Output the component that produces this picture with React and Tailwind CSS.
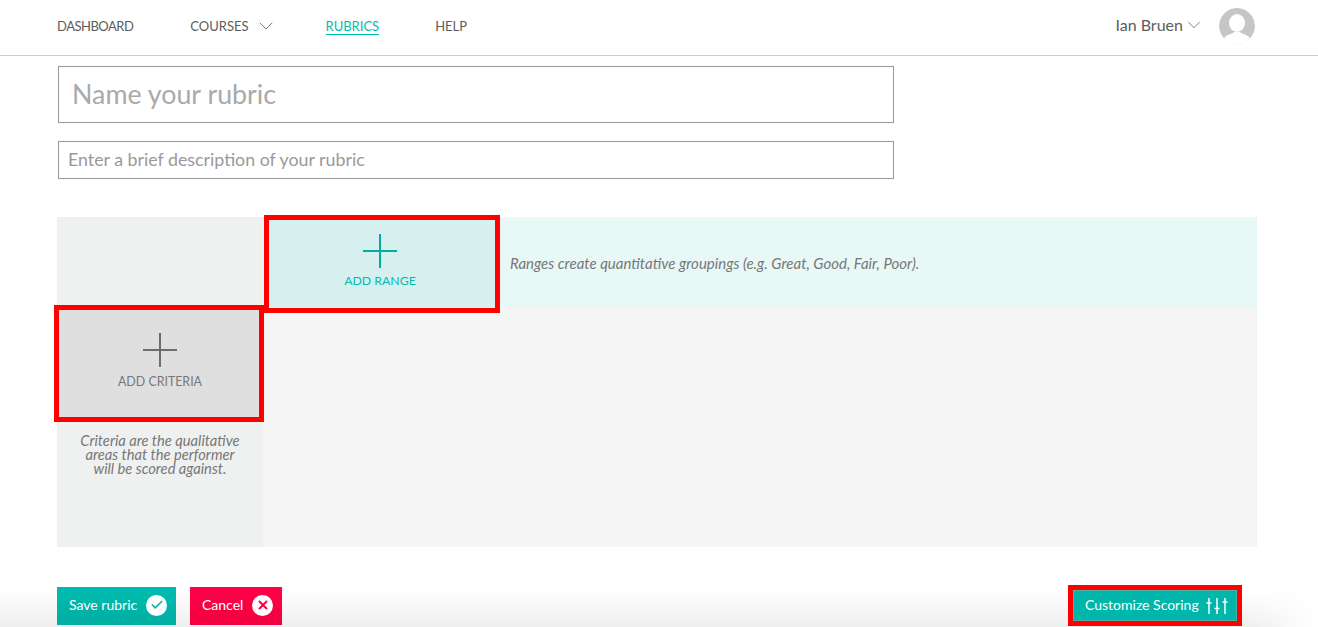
import React from "react";
import { Check, ChevronDown, X } from "lucide-react";

const NavLink = ({ children, active, className = "" }) => (
  <a
    className={`text-[13px] leading-[16px] ${active ? "text-[#00bdb1] border-b border-[#00bdb1]" : "text-[#5c5c5c] border-b border-transparent"} ${className}`}
  >
    {children}
  </a>
);

const Plus = ({ color }) => (
  <svg width="34" height="34" viewBox="0 0 34 34" className={color}>
    <path d="M17 0V34M0 17H34" stroke="currentColor" strokeWidth="2" fill="none" />
  </svg>
);

const Avatar = () => (
  <svg width="36" height="36" viewBox="0 0 36 36" className="rounded-full">
    <circle cx="18" cy="18" r="18" fill="#c6c6c6" />
    <ellipse cx="18" cy="15" rx="8" ry="9" fill="#fff" />
    <path d="M3 36L6 29C9 26 13 26 15 24H21C23 26 27 26 30 29L33 36Z" fill="#fff" />
  </svg>
);

const SlidersIcon = () => (
  <svg width="22" height="18" viewBox="0 0 22 18" fill="none" stroke="#fff" strokeWidth="1.5">
    <path d="M3 1V17M11 1V17M19 1V17" />
    <path d="M0.5 6H5.5M8.5 11.5H13.5M16.5 5H21.5" />
  </svg>
);

const App = () => {
  return (
    <div className="relative h-[627px] overflow-hidden bg-white font-['Lato','Liberation_Sans',sans-serif]">

      <header className="h-[56px] border-b border-[#cccccc] flex items-center justify-between pb-[3px] pl-[57px] pr-[63px]">
        <nav className="flex items-center">
          <NavLink className="mr-[57px] tracking-[-0.5px]">DASHBOARD</NavLink>
          <NavLink>COURSES</NavLink>
          <ChevronDown size={24} strokeWidth={0.8} className="ml-[5px] mr-[48px] text-[#555]" />
          <NavLink active className="mr-[56px]">RUBRICS</NavLink>
          <NavLink>HELP</NavLink>
        </nav>
        <div className="flex items-center">
          <span className="mb-[2px] text-[16px] text-[#5c5c5c]">Ian Bruen</span>
          <ChevronDown size={22} strokeWidth={0.8} className="mb-[2px] mr-[14px] text-[#555]" />
          <Avatar />
        </div>
      </header>

      <main className="pl-[57px] w-[1257px]">
        <input
          placeholder="Name your rubric"
          className="block ml-px mt-[10px] w-[836px] h-[57px] border border-[#999] px-[13px] pb-[2px] text-[26.8px] placeholder:text-[#aaa] outline-none"
        />
        <input
          placeholder="Enter a brief description of your rubric"
          className="block ml-px mt-[18px] w-[836px] h-[38px] border border-[#999] px-[9px] pb-[2px] text-[17.8px] placeholder:text-[#999] outline-none"
        />

        <div className="mt-[38px] w-[1200px]">
          <div className="flex h-[91px] bg-[#e8f8f7]">
            <div className="w-[206px] bg-[#eff1f1]"></div>
            <button className="relative z-10 ml-px -mt-[2px] w-[236px] h-[98px] border-[5px] border-[#ff0000] bg-[#d5f0ef] flex flex-col items-center pt-[14px] pr-[4px]">
              <Plus color="text-[#00ad9f]" />
              <span className="mt-[5px] text-[12.3px] leading-[16px] text-[#00bdb1]">ADD RANGE</span>
            </button>
            <p className="ml-[10px] mt-px self-center text-[15px] italic text-[#777]">
              Ranges create quantitative groupings (e.g. Great, Good, Fair, Poor).
            </p>
          </div>

          <div className="flex h-[239px] bg-[#f5f5f5]">
            <div className="w-[206px] bg-[#eff1f1] flex flex-col">
              <button className="-ml-[3px] -mt-[3px] shrink-0 w-[210px] h-[117px] border-[5px] border-[#ff0000] bg-[#dfdfdf] flex flex-col items-center pt-[23px] pl-[2px]">
                <Plus color="text-[#6d6d6f]" />
                <span className="mt-[7px] text-[12.4px] leading-[16px] text-[#777]">ADD CRITERIA</span>
              </button>
              <p className="mt-[11px] mx-auto w-[165px] text-center text-[14.7px] leading-[14px] italic text-[#777]">
                Criteria are the qualitative areas that the performer will be scored against.
              </p>
            </div>
          </div>
        </div>
      </main>

      <div className="absolute inset-x-0 bottom-0 h-[37px] bg-gradient-to-t from-[#eeeeee] to-white"></div>
      <div className="absolute right-0 bottom-0 w-[76px] h-[37px] bg-gradient-to-r from-transparent to-white"></div>

      <footer className="absolute left-[57px] right-[76px] bottom-0 flex items-end justify-between">
        <div className="flex gap-[14px] mb-[2px]">
          <button className="h-[38px] w-[119px] bg-gradient-to-b from-[#00bdb1] to-[#00ada1] text-white text-[14px] flex items-center justify-between pb-[3px] pl-[12px] pr-[9px]">
            Save rubric
            <span className="mt-[3px] -translate-y-[1px] w-[21px] h-[21px] rounded-full bg-white flex items-center justify-center">
              <Check size={14} strokeWidth={3} className="text-[#00bdb1]" />
            </span>
          </button>
          <button className="h-[38px] w-[92px] bg-gradient-to-b from-[#ff0047] to-[#f2003f] text-white text-[14px] flex items-center justify-between pb-[3px] pl-[12px] pr-[9px]">
            Cancel
            <span className="mt-[3px] -translate-y-[1px] w-[21px] h-[21px] rounded-full bg-white flex items-center justify-center">
              <X size={14} strokeWidth={3.5} className="text-[#ff0047]" />
            </span>
          </button>
        </div>
        <button className="mb-px h-[41px] w-[174px] border-[5px] border-[#ff0000] bg-[#00b5a9] shadow-[inset_0_0_0_1px_#4fb0a8] text-white text-[14px] flex items-center justify-between pb-[2px] pl-[12px] pr-[9px]">
          Customize Scoring
          <span className="mt-[2px]"><SlidersIcon /></span>
        </button>
      </footer>

    </div>
  );
};

export default App;
